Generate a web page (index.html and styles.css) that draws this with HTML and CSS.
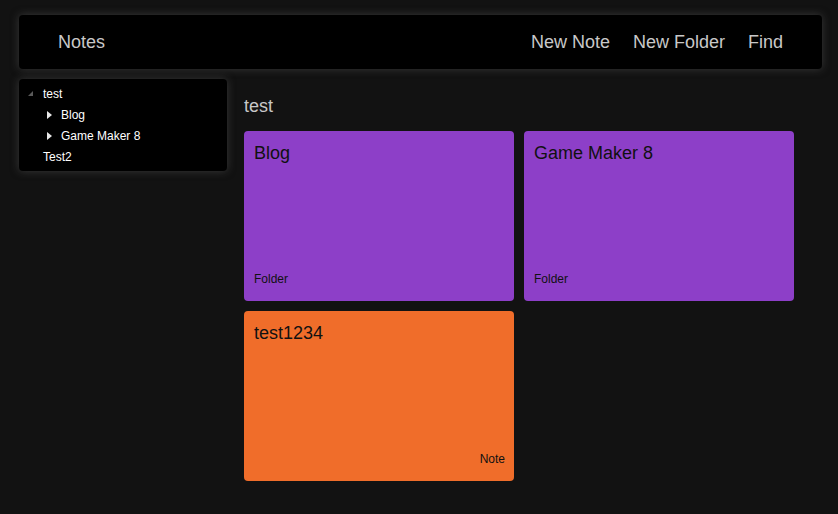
FILE: index.html
```html
<!DOCTYPE html>
<html>
<head>
<meta charset="utf-8">
<link rel="stylesheet" href="styles.css">
</head>
<body>
<header class="navbar">
  <a class="brand">Notes</a>
  <nav class="menu">
    <a>New Note</a>
    <a>New Folder</a>
    <a>Find</a>
  </nav>
</header>
<div class="layout">
  <aside class="tree">
    <div class="node">
      <span class="twisty open"></span><span class="label">test</span>
    </div>
    <div class="node child">
      <span class="twisty closed"></span><span class="label">Blog</span>
    </div>
    <div class="node child">
      <span class="twisty closed"></span><span class="label">Game Maker 8</span>
    </div>
    <div class="node">
      <span class="twisty"></span><span class="label">Test2</span>
    </div>
  </aside>
  <main class="main">
    <h1 class="title">test</h1>
    <div class="grid">
      <div class="card folder">
        <div class="card-title">Blog</div>
        <div class="card-type">Folder</div>
      </div>
      <div class="card folder">
        <div class="card-title">Game Maker 8</div>
        <div class="card-type">Folder</div>
      </div>
      <div class="card note">
        <div class="card-title">test1234</div>
        <div class="card-type right">Note</div>
      </div>
    </div>
  </main>
</div>
</body>
</html>
```
FILE: styles.css
```css
* { box-sizing: border-box; }
html, body {
  margin: 0;
  background: #121212;
  font-family: "Liberation Sans", Arial, sans-serif;
}
body {
  padding: 15px 16px 0 19px;
}
.navbar {
  height: 54px;
  background: #000;
  border-radius: 4px;
  box-shadow: 0 0 8px rgba(90, 90, 90, 0.55);
  display: flex;
  align-items: center;
  justify-content: space-between;
  padding: 0 39px;
}
.brand, .menu a {
  color: #c8c8c8;
  font-size: 18px;
  text-decoration: none;
}
.menu {
  display: flex;
  gap: 23px;
}
.layout {
  display: flex;
  margin-top: 10px;
  gap: 17px;
  align-items: flex-start;
}
.tree {
  width: 208px;
  background: #000;
  border-radius: 4px;
  box-shadow: 0 0 8px rgba(90, 90, 90, 0.55);
  padding: 4px 0;
}
.node {
  display: flex;
  align-items: center;
  height: 21px;
  padding-left: 8px;
  color: #fff;
  font-size: 12px;
}
.node.child { padding-left: 26px; }
.twisty {
  width: 16px;
  height: 21px;
  position: relative;
  flex: none;
}
.twisty.open::before {
  content: "";
  position: absolute;
  left: 1px;
  top: 8px;
  width: 0;
  height: 0;
  border-style: solid;
  border-width: 0 0 5px 5px;
  border-color: transparent transparent #5a5a5a transparent;
}
.twisty.closed::before {
  content: "";
  position: absolute;
  left: 2px;
  top: 7px;
  width: 0;
  height: 0;
  border-style: solid;
  border-width: 4px 0 4px 5px;
  border-color: transparent transparent transparent #e8e8e8;
}
.main {
  flex: 1;
}
.title {
  margin: 0;
  font-size: 18px;
  font-weight: normal;
  color: #c8c8c8;
  padding-top: 17px;
  line-height: 21px;
  height: 52px;
}
.grid {
  display: grid;
  grid-template-columns: repeat(2, 270px);
  grid-auto-rows: 170px;
  gap: 10px;
}
.card {
  border-radius: 4px;
  padding: 11px 9px 15px 10px;
  display: flex;
  flex-direction: column;
  justify-content: space-between;
  color: #111;
}
.card.folder { background: #8d3fc8; }
.card.note { background: #f06d2a; }
.card-title {
  font-size: 18px;
  line-height: 22px;
}
.card-type {
  font-size: 12px;
  line-height: 14px;
}
.card-type.right { text-align: right; }
```
